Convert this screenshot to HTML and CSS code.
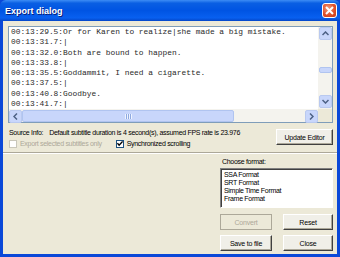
FILE: index.html
```html
<!DOCTYPE html>
<html>
<head>
  <link rel="stylesheet" href="styles.css">
</head>
<body>
  <div class="window">
    <div class="titlebar">
      <span class="title">Export dialog</span>
      <span class="close">
        <svg width="9" height="9" viewBox="0 0 9 9"><path d="M1 1L8 8M8 1L1 8" stroke="#fff" stroke-width="2"/></svg>
      </span>
    </div>
    <div class="content">
      <div class="editor">
        <div class="lines">
          <div>00:13:29.5:Or for Karen to realize|she made a big mistake.</div>
          <div>00:13:31.7:|</div>
          <div>00:13:32.0:Both are bound to happen.</div>
          <div>00:13:33.8:|</div>
          <div>00:13:35.5:Goddammit, I need a cigarette.</div>
          <div>00:13:37.5:|</div>
          <div>00:13:40.8:Goodbye.</div>
          <div>00:13:41.7:|</div>
        </div>
        <div class="vscroll">
          <span class="arrow"><svg width="7" height="5" viewBox="0 0 7 5"><path d="M0.5 4L3.5 1L6.5 4" fill="none" stroke="#4d6185" stroke-width="1.5"/></svg></span>
          <div class="vtrack"><span class="vthumb"></span></div>
          <span class="arrow"><svg width="7" height="5" viewBox="0 0 7 5"><path d="M0.5 1L3.5 4L6.5 1" fill="none" stroke="#4d6185" stroke-width="1.5"/></svg></span>
        </div>
        <div class="hscroll">
          <span class="arrow"><svg width="5" height="7" viewBox="0 0 5 7"><path d="M4 0.5L1 3.5L4 6.5" fill="none" stroke="#4d6185" stroke-width="1.5"/></svg></span>
          <div class="htrack"><span class="hthumb"><span class="grip"></span></span></div>
          <span class="arrow"><svg width="5" height="7" viewBox="0 0 5 7"><path d="M1 0.5L4 3.5L1 6.5" fill="none" stroke="#4d6185" stroke-width="1.5"/></svg></span>
        </div>
        <div class="corner"></div>
      </div>

      <div class="info">
        <div class="info-text">
          <div class="source">
            <span>Source Info:</span>
            <span class="duration">Default subtitle duration is 4 second(s), assumed FPS rate is 23.976</span>
          </div>
          <div class="checks">
            <label class="check disabled"><span class="box"></span>Export selected subtitles only</label>
            <label class="check"><span class="box checked"><svg width="7" height="7" viewBox="0 0 7 7"><path d="M0.5 3L2.5 5.5L6.5 1" fill="none" stroke="#000" stroke-width="1.6"/></svg></span>Synchronized scrolling</label>
          </div>
        </div>
        <button class="btn update">Update Editor</button>
      </div>

      <div class="sep"></div>

      <div class="lower">
        <div class="format">
          <div class="format-label">Choose format:</div>
          <div class="list">
            <div>SSA Format</div>
            <div>SRT Format</div>
            <div>Simple Time Format</div>
            <div>Frame Format</div>
          </div>
          <div class="buttons">
            <button class="btn" disabled>Convert</button>
            <button class="btn">Reset</button>
            <button class="btn">Save to file</button>
            <button class="btn">Close</button>
          </div>
        </div>
      </div>
    </div>
  </div>
</body>
</html>
```

FILE: styles.css
```css
body {
  margin: 0;
  font-family: "Liberation Sans", Arial, sans-serif;
  font-size: 7px;
  letter-spacing: -0.3px;
  color: #000;
}
.window {
  width: 340px;
  height: 257px;
  box-sizing: border-box;
  background: #0a48d8;
  padding: 0 3px 3px 3px;
  display: flex;
  flex-direction: column;
}
.titlebar {
  height: 21px;
  margin: 0 -3px;
  padding: 0 3px 0 5px;
  display: flex;
  align-items: center;
  justify-content: space-between;
  background: linear-gradient(#3d8df5 0%, #0a5fe3 15%, #0054e3 50%, #0860f0 85%, #0446c8 100%);
  border-radius: 6px 6px 0 0;
}
.title {
  color: #fff;
  font-weight: bold;
  font-size: 9px;
  letter-spacing: 0;
  text-shadow: 1px 1px 0 #0a1e78;
}
.close {
  width: 15px;
  height: 15px;
  box-sizing: border-box;
  border: 1px solid #fff;
  border-radius: 3px;
  background: radial-gradient(circle at 40% 35%, #f0a080 0%, #e0512c 55%, #c33a16 100%);
  display: flex;
  align-items: center;
  justify-content: center;
}
.content {
  flex: 1;
  background: #ece9d8;
  padding: 5px 4px 0 5px;
  display: flex;
  flex-direction: column;
}
.editor {
  height: 97px;
  box-sizing: border-box;
  border: 1px solid #7f9db9;
  background: #fff;
  display: grid;
  grid-template-columns: 1fr 14px;
  grid-template-rows: 1fr 13px;
}
.lines {
  font-family: "Liberation Mono", "Courier New", monospace;
  font-size: 7.9px;
  letter-spacing: 0;
  line-height: 10.3px;
  color: #2a2a2a;
  padding: 0 0 0 2px;
  overflow: hidden;
}
.lines div {
  white-space: pre;
}
.vscroll {
  background: #f4f3ee;
  display: flex;
  flex-direction: column;
  padding: 0 0 1px 1px;
}
.hscroll {
  background: #f4f3ee;
  display: flex;
  padding: 1px 0 0 0;
}
.corner {
  background: #ece9d8;
}
.arrow {
  width: 13px;
  height: 13px;
  flex: none;
  box-sizing: border-box;
  border: 1px solid #b9c9ef;
  border-radius: 2px;
  background: #c8d6fb;
  display: flex;
  align-items: center;
  justify-content: center;
}
.vtrack {
  flex: 1;
  position: relative;
}
.vthumb {
  position: absolute;
  left: 0;
  right: 0;
  top: 27px;
  height: 4px;
  background: #c8d6fb;
  border: 1px solid #b0c4f0;
  border-radius: 2px;
}
.htrack {
  flex: 1;
  display: flex;
}
.hthumb {
  flex: none;
  width: 212px;
  box-sizing: border-box;
  background: #c8d6fb;
  border: 1px solid #b0c4f0;
  border-radius: 2px;
  display: flex;
  align-items: center;
  justify-content: center;
}
.grip {
  width: 7px;
  height: 5px;
  background: repeating-linear-gradient(90deg, #eef3ff 0 1px, #8faae0 1px 2px);
}
.info {
  display: flex;
  justify-content: space-between;
  align-items: flex-start;
  margin-top: 4px;
}
.info-text {
  padding-left: 1px;
  white-space: nowrap;
}
.source {
  display: flex;
  gap: 6px;
  height: 11px;
  align-items: center;
}
.checks {
  display: flex;
  gap: 14px;
  height: 11px;
  align-items: center;
}
.check {
  display: flex;
  align-items: center;
  gap: 3px;
}
.check.disabled {
  color: #aca899;
}
.box {
  width: 8px;
  height: 8px;
  box-sizing: border-box;
  border: 1px solid #1c5180;
  background: #fff;
  display: flex;
  align-items: center;
  justify-content: center;
}
.check.disabled .box {
  border-color: #c9c7ba;
}
.btn {
  font-family: "Liberation Sans", Arial, sans-serif;
  font-size: 7px;
  letter-spacing: -0.2px;
  color: #000;
  box-sizing: border-box;
  height: 16px;
  padding: 0;
  border: 1px solid;
  border-color: #fff #404040 #404040 #fff;
  box-shadow: inset -1px -1px 0 #aca899;
  background: #f0efe8;
}
.btn:disabled {
  color: #aca899;
  border-color: #aca899;
  box-shadow: none;
  background: #ece9d8;
}
.update {
  width: 57px;
  margin-top: 2px;
}
.sep {
  height: 0;
  border-top: 1px solid #aca899;
  border-bottom: 1px solid #fff;
  margin: 3px -4px 0 -5px;
}
.lower {
  display: flex;
  justify-content: flex-end;
}
.format {
  width: 113px;
  margin-top: 3px;
}
.format-label {
  height: 10px;
  padding-left: 2px;
  line-height: 10px;
}
.list {
  height: 40px;
  box-sizing: border-box;
  border: 1px solid;
  border-color: #808080 #fff #fff #808080;
  box-shadow: inset 1px 1px 0 #404040;
  background: #fff;
  padding: 2px 0 0 3px;
  line-height: 8px;
  margin-top: 1px;
}
.buttons {
  display: grid;
  grid-template-columns: 52px 50px;
  justify-content: space-between;
  row-gap: 5px;
  margin-top: 6px;
}
```
